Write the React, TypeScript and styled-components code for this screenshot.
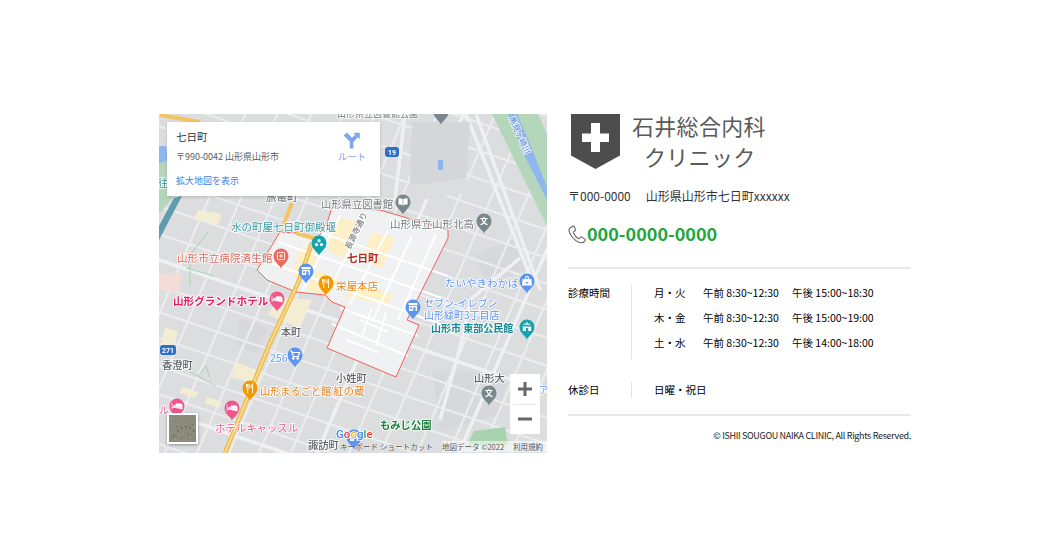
import React from "react";
import styled, { createGlobalStyle } from "styled-components";

const FONT = `"Noto Sans CJK JP", "Noto Sans", sans-serif`;

const Global = createGlobalStyle`
  html, body { margin: 0; padding: 0; background: #fff; }
  body { font-family: ${FONT}; color: #222; overflow: hidden; }
`;

const Page = styled.div`
  display: flex;
  align-items: flex-start;
  gap: 21px;
  width: 1063px;
  height: 560px;
  box-sizing: border-box;
  padding: 114px 0 0 159px;
`;

const MapFrame = styled.div`
  position: relative;
  flex: none;
  width: 388px;
  height: 339px;
  overflow: hidden;
  background: #dcdddf;
`;

const MapSvg = styled.svg`
  display: block;
  width: 388px;
  height: 339px;
  filter: blur(0.3px);
`;

const MapLabel = styled.text<{ $c: string; $s: number; $w: number }>`
  font-family: ${FONT};
  font-size: ${(p) => p.$s}px;
  font-weight: ${(p) => p.$w};
  fill: ${(p) => p.$c};
  stroke: rgba(255, 255, 255, 0.8);
  stroke-width: 2px;
  paint-order: stroke;
  stroke-linejoin: round;
`;

const PinGlyph = styled.text`
  font-family: ${FONT};
  font-size: 8px;
  font-weight: 700;
  fill: #fff;
  text-anchor: middle;
`;

const GoogleMark = styled.text`
  font-family: "Roboto", "Liberation Sans", sans-serif;
  font-size: 11.5px;
  font-weight: 500;
  stroke: #fff;
  stroke-width: 1.5px;
  paint-order: stroke;
`;

const InfoCard = styled.div`
  position: absolute;
  left: 8px;
  top: 8px;
  width: 213px;
  height: 74px;
  box-sizing: border-box;
  padding: 7px 5px 0 9px;
  background: #fff;
  box-shadow: 0 1px 3px rgba(0, 0, 0, 0.18);
  display: grid;
  grid-template-columns: 1fr 46px;
`;

const CardText = styled.div`
  display: flex;
  flex-direction: column;
`;

const PlaceName = styled.div`
  font-size: 10.5px;
  line-height: 16px;
  font-weight: 400;
  color: #2f2f2f;
`;

const PlaceAddress = styled.div`
  margin-top: 4px;
  font-size: 9px;
  line-height: 16px;
  color: #5b5b5b;
`;

const EnlargeLink = styled.a`
  margin-top: 8px;
  font-size: 9px;
  line-height: 16px;
  color: #3b7fe0;
`;

const RouteBlock = styled.div`
  display: flex;
  flex-direction: column;
  align-items: center;
  padding-top: 2px;
  color: #7fa8ec;
  font-size: 9.5px;
  line-height: 14px;
`;

const Thumb = styled.div`
  position: absolute;
  left: 8px;
  top: 299px;
  width: 31px;
  height: 31px;
  box-sizing: border-box;
  border: 2px solid #fff;
  box-shadow: 0 1px 3px rgba(0, 0, 0, 0.35);
  background: #8c8a7a;
  overflow: hidden;
`;

const ZoomBox = styled.div`
  position: absolute;
  left: 351px;
  top: 260px;
  width: 30px;
  height: 60px;
  background: #fff;
  display: flex;
  flex-direction: column;
  align-items: center;
`;

const ZoomBtn = styled.div`
  flex: 1;
  width: 100%;
  display: flex;
  align-items: center;
  justify-content: center;
`;

const ZoomSep = styled.div`
  width: 24px;
  height: 1px;
  background: #e6e6e6;
`;

const MapFooter = styled.div`
  position: absolute;
  right: 0;
  bottom: 0;
  left: 181px;
  height: 13px;
  display: flex;
  align-items: center;
  font-size: 7.5px;
  color: #555;
  white-space: nowrap;
`;

const FootKeys = styled.span`
  width: 102px;
  letter-spacing: 0.1px;
  text-shadow: 0 0 2px #fff;
`;

const FootData = styled.span`
  width: 71px;
  background: rgba(255, 255, 255, 0.55);
`;

const FootTerms = styled.span`
  flex: 1;
  background: rgba(255, 255, 255, 0.55);
`;

const Info = styled.div`
  flex: none;
  width: 343px;
`;

const LogoRow = styled.div`
  display: flex;
  height: 54px;
  padding-left: 3px;
`;

const LogoWords = styled.div`
  margin-left: 12px;
  margin-top: -4px;
  color: #5a5a5a;
  font-weight: 400;
  font-size: 22px;
  line-height: 31px;
  letter-spacing: 0.3px;
`;

const LogoSub = styled.div`
  padding-left: 12px;
  letter-spacing: 0.3px;
`;

const Address = styled.p`
  margin: 18px 0 0;
  font-size: 12px;
  line-height: 20px;
  color: #333;
`;

const Gap = styled.span`
  display: inline-block;
  width: 15px;
`;

const PhoneRow = styled.div`
  display: flex;
  align-items: center;
  height: 28px;
  margin-top: 14px;
`;

const PhoneNumber = styled.span`
  font-size: 18px;
  font-weight: 700;
  color: #22a63d;
  line-height: 26px;
  padding-bottom: 3px;
`;

const Rule = styled.hr`
  margin: 0;
  border: 0;
  height: 2px;
  background: #e8e8e8;
`;

const FirstRule = styled(Rule)`
  margin-top: 19px;
`;

const HoursBlock = styled.div`
  display: grid;
  grid-template-columns: 63px 1fr;
  margin-top: 16px;
`;

const HolidayBlock = styled(HoursBlock)`
  margin-top: 23px;
`;

const HoursTerm = styled.div`
  font-size: 10.5px;
  line-height: 16px;
  color: #000;
`;

const HoursValue = styled.div`
  border-left: 1px solid #e3e3e3;
  padding-left: 22px;
  display: flex;
  flex-direction: column;
`;

const HoursRow = styled.div`
  display: grid;
  grid-template-columns: 49px 89px auto;
  height: 25px;
  font-size: 10.5px;
  line-height: 16px;
  color: #000;
  white-space: nowrap;
`;

const LastHoursRow = styled(HoursRow)`
  height: 24px;
`;

const HolidayValue = styled.div`
  font-size: 10.5px;
  line-height: 16px;
  color: #000;
`;

const SecondRule = styled(Rule)`
  margin-top: 16px;
`;

const Copyright = styled.p`
  margin: 12px 0 0;
  text-align: right;
  font-size: 9px;
  line-height: 16px;
  letter-spacing: -0.33px;
  color: #222;
`;

type L = [string, number, number, string, number, number];
const labels: L[] = [
  ["山形県立図書館", 321, 208, "#787c80", 10.3, 400],
  ["山形県立山形北高", 390, 228, "#787c80", 10.5, 400],
  ["旅篭町", 266, 201, "#5f6368", 10.5, 400],
  ["水の町屋七日町御殿堰", 231, 231, "#3a9aa5", 10.5, 400],
  ["山形市立病院済生館", 177, 262, "#e0695e", 10.6, 400],
  ["七日町", 347, 262, "#b3261e", 10.5, 700],
  ["栄屋本店", 336, 290, "#e8861a", 10.5, 400],
  ["山形グランドホテル", 173, 305, "#e91e63", 10.6, 700],
  ["本町", 281, 336, "#5f6368", 10, 500],
  ["256", 270, 362, "#6a9df2", 10.5, 400],
  ["香澄町", 162, 369, "#5f6368", 10.3, 500],
  ["小姓町", 336, 382, "#5f6368", 10.3, 500],
  ["山形まるごと館 紅の蔵", 260, 395, "#e8861a", 10.2, 400],
  ["ホテルキャッスル", 215, 432, "#ee5c8c", 10.4, 400],
  ["諏訪町", 308, 449, "#5f6368", 10.3, 500],
  ["もみじ公園", 380, 429, "#188038", 10.3, 700],
  ["たいやきわかば", 445, 287, "#5f95f2", 10.5, 400],
  ["セブン-イレブン", 424, 307, "#5f95f2", 10, 400],
  ["山形緑町3丁目店", 424, 319, "#5f95f2", 10, 400],
  ["山形市 東部公民館", 431, 332, "#138a96", 10, 700],
  ["山形大", 474, 382, "#5f6368", 10.3, 500],
  ["ル", 159, 414, "#ee5c8c", 10, 400],
  ["ア", 539, 394, "#5f95f2", 10, 400],
  ["山形県立図書館公園", 337, 117, "#787c80", 9, 400],
  ["往", 158, 187, "#2f8f9a", 10, 400],
];

const A = (x0: number): [number, number, number, number] => [x0 + 340 * 0.432, 113, x0, 453];
const B = (y0: number): [number, number, number, number] => [159, y0, 547, y0 + 388 * 0.34];

const minorA = [-60, -28, 6, 38, 70, 100, 132, 190, 222, 258, 290, 322, 352, 385, 420, 452];
const minorB = [-160, -130, -100, -72, -44, -16, 12, 38, 64, 92, 120, 172, 198, 224, 252, 280, 330, 356, 384, 410, 440];
const majorA = [158, 300];
const majorB = [146, 296, 380];

const blocks = [
  "476,255 516,238 528,268 486,286",
  "240,318 268,328 256,354 236,345",
  "433,371 508,372 500,414 440,432",
];

const paleCream = [
  "198,210 222,214 218,224 194,220",
  "278,297 312,300 300,328 268,315",
  "165,327 178,332 172,353 159,350",
  "182,387 198,392 195,398 180,393",
  "207,397 222,402 219,408 205,403",
  "236,362 262,372 258,384 232,378",
];

const districtCream = [
  "335,218 362,222 345,258 328,252",
  "372,232 395,238 382,268 360,262",
  "300,247 318,252 310,282 292,276",
  "316,270 340,280 328,296 306,290",
  "347,282 392,294 388,305 345,296",
];

const lightStreets: [number, number, number, number][] = [
  [340, 216, 302, 292], [364, 222, 326, 296], [388, 230, 350, 304], [412, 236, 372, 322], [436, 234, 398, 320],
  [268, 262, 440, 324], [278, 242, 448, 300], [290, 222, 448, 276], [332, 324, 408, 356], [340, 308, 418, 336],
  [346, 340, 378, 352], [360, 320, 388, 332], [372, 308, 362, 336], [386, 312, 376, 346],
];

type PinProps = { x: number; y: number; c: string; kind: string };
const Pin = ({ x, y, c, kind }: PinProps) => (
  <g transform={`translate(${x} ${y})`}>
    <path d="M0 12.5C-1.5 8.6-7.5 6-7.5 0A7.5 7.5 0 0 1 7.5 0C7.5 6 1.5 8.6 0 12.5Z" fill={c} />
    {kind === "food" && (
      <path d="M-3.5-4v3.4c0 1 .6 1.5 1.2 1.7V5M-2.3-4v3M-1-4v3.4c0 .8-.6 1.4-1.3 1.6M2.6 5V-4.2C1.3-3.6 1-1.8 1-.2h1.6" fill="none" stroke="#fff" strokeWidth="0.95" />
    )}
    {kind === "shop" && (
      <g fill="#fff">
        <rect x="-4.5" y="-4" width="9" height="2" />
        <path d="M-4-1.2h8V4h-1.4V.2h-2.4V4H-4Zm1.2 1.4v2h1.8v-2Z" />
      </g>
    )}
    {kind === "cart" && (
      <g fill="none" stroke="#fff" strokeWidth="1.2">
        <path d="M-5-4h1.6l1.8 5.5H3.2L4.6-2.5H-3" />
        <circle cx="-1.6" cy="3.4" r=".7" fill="#fff" />
        <circle cx="2.7" cy="3.4" r=".7" fill="#fff" />
      </g>
    )}
    {kind === "hotel" && (
      <path d="M-5-3.4v6.6M-5 1.2H5.2v2M-3.4-.6h1.6V.8h-1.6ZM-1-2.2H3.6c1 0 1.6.6 1.6 1.8V.8H-1Z" fill="#fff" stroke="#fff" strokeWidth="0.7" />
    )}
    {kind === "school" && (
      <PinGlyph x="0" y="3">文</PinGlyph>
    )}
    {kind === "book" && (
      <path d="M-4.6-3.6C-2.8-4-1.2-3.6-.3-2.8V3.4C-1.2 2.6-2.8 2.2-4.6 2.6ZM4.6-3.6C2.8-4 1.2-3.6.3-2.8V3.4C1.2 2.6 2.8 2.2 4.6 2.6Z" fill="#fff" />
    )}
    {kind === "dots" && (
      <g fill="#fff">
        <circle cx="0" cy="-2.3" r="1.6" />
        <circle cx="-2.5" cy="1.6" r="1.6" />
        <circle cx="2.5" cy="1.6" r="1.6" />
      </g>
    )}
    {kind === "temple" && (
      <path d="M-3.4-3.2h6.8v1H-3.4ZM-4.2-.6h8.4V4H1.2V1H-1.2V4h-3ZM-.6-5h1.2v1.8H-.6Z" fill="#fff" />
    )}
    {kind === "bag" && (
      <path d="M-4.4-2H4.4L5 4.4H-5ZM-2-2V-3A2 2 0 0 1 2-3V-2H.9V-3A.9.9 0 0 0-.9-3V-2ZM-1.6 1A1.6 1.6 0 0 0 1.6 1Z" fill="#fff" fillRule="evenodd" />
    )}
    {kind === "hospital" && (
      <g fill="none" stroke="#fff" strokeWidth=".9">
        <rect x="-3.6" y="-3.6" width="7.2" height="7.2" rx="1" />
        <path d="M0-2v4M-2 0h4" />
      </g>
    )}
  </g>
);

const pins: PinProps[] = [
  { x: 441, y: 112, c: "#78868e", kind: "none" },
  { x: 403, y: 202, c: "#78868e", kind: "book" },
  { x: 484, y: 221, c: "#78868e", kind: "school" },
  { x: 489, y: 393, c: "#78868e", kind: "school" },
  { x: 319, y: 243, c: "#12a5b0", kind: "dots" },
  { x: 281, y: 256, c: "#ea6a5e", kind: "hospital" },
  { x: 306, y: 271, c: "#5b95f2", kind: "shop" },
  { x: 326, y: 283, c: "#f29900", kind: "food" },
  { x: 277, y: 299, c: "#f0558c", kind: "hotel" },
  { x: 295, y: 355, c: "#5b95f2", kind: "cart" },
  { x: 250, y: 388, c: "#f29900", kind: "food" },
  { x: 232, y: 408, c: "#f0558c", kind: "hotel" },
  { x: 177, y: 406, c: "#f0558c", kind: "hotel" },
  { x: 413, y: 307, c: "#5b95f2", kind: "shop" },
  { x: 527, y: 281, c: "#5b95f2", kind: "bag" },
  { x: 527, y: 327, c: "#12a5b0", kind: "temple" },
  { x: 354, y: 437, c: "#5b95f2", kind: "shop" },
];

const specks = Array.from({ length: 320 }, (_, i) => ({
  x: (i * 37) % 27,
  y: (i * i * 13 + i * 7) % 27,
  c: ["#6d6c5e", "#a8a596", "#7a7768", "#b5b1a2", "#5f6252"][i % 5],
}));

const Shield = () => (
  <svg width="49" height="56" viewBox="0 0 49 56">
    <path d="M0 0H49V41.500L24.500 55L0 41.500Z" fill="#4d4d4d" />
    <path d="M20 9h9v10.500h9v8.500H29v10h-9V28H11V19.500h9Z" fill="#fff" />
  </svg>
);

const Phone = () => (
  <svg width="19" height="19" viewBox="0 0 19 19" fill="none" stroke="#666" strokeWidth="1.100" strokeLinejoin="round">
    <path d="M4.600 1.200 2 3C.7 4 .9 6 1.600 7.700c1.300 3 3.400 5.700 6 7.700 1.600 1.200 3.600 2.600 5.600 2.400 1.400 0 3.400-1.300 4-2.400.3-.5.1-1-.3-1.300l-3-2c-.5-.3-1-.3-1.400.1l-1 1.200c-.4.4-.9.4-1.400.1-2-1.400-3.500-3.400-4.600-5.600-.2-.5-.1-1 .3-1.300l1.200-.9c.4-.3.5-.8.3-1.300L6.200 1.500c-.3-.5-1-.6-1.600-.3Z" />
  </svg>
);

const RouteIcon = () => (
  <svg width="18" height="18" viewBox="0 0 18 18" fill="#7fa8ec">
    <path d="M6.800 17.500V10.500L.6 4.400 3.800 1.400 9 6.700 12.200 3.600 10.300 1.700H16.800V8.200L14.900 6.300 10.400 10.900V17.500Z" />
  </svg>
);

export default function App() {
  return (
    <>
      <Global />
      <Page>
        <MapFrame>
          <MapSvg viewBox="159 114 388 339">
            <rect x="159" y="114" width="388" height="339" fill="#dcdddf" />
            {blocks.map((p) => (
              <polygon key={p} points={p} fill="#d6d8db" />
            ))}
            <g stroke="#ebecee" strokeWidth="2.2" fill="none">
              {minorA.map((x) => {
                const [a, b, c, d] = A(x + 159);
                return <line key={x} x1={a} y1={b} x2={c} y2={d} />;
              })}
              {minorB.map((y) => {
                const [a, b, c, d] = B(y + 114);
                return <line key={y} x1={a} y1={b} x2={c} y2={d} />;
              })}
            </g>
            <g stroke="#eff0f1" strokeWidth="3.5" fill="none">
              {majorA.map((x) => {
                const [a, b, c, d] = A(x + 159);
                return <line key={x} x1={a} y1={b} x2={c} y2={d} />;
              })}
              {majorB.map((y) => {
                const [a, b, c, d] = B(y + 114);
                return <line key={y} x1={a} y1={b} x2={c} y2={d} />;
              })}
              <path d="M476 114 540 290M466 114 530 276M520 258 470 300 462 340 440 420" />
              <path d="M405 114 395 200" />
            </g>
            <path d="M492 114H538L547 134V226Z" fill="#b4d6bb" />
            <path d="M508 114H517L527 137 547 187V200L537 180 523 153Z" fill="#8fb6ee" />
            <path d="M159 146 166 150 174 196 159 214Z" fill="#b4d6bb" />
            <path d="M159 146H166L168 160 159 163Z" fill="#8fb6ee" />
            <path d="M182 196 159 240V226L174 198Z" fill="#5f9cb0" />
            <path d="M467 445 474 431 505 427 508 445Z" fill="#a9d3b0" />
            <path d="M159 273H183L178 292 159 290Z" fill="#f4dcd8" />
            <polygon points="412,122 470,122 466,178 410,186" fill="#d5d6d9" />
            <path d="M410 186 466 178 472 192 420 200Z" fill="#dcdddf" />
            <rect x="438" y="160" width="5" height="10" fill="#8fb6ee" />
            {paleCream.map((p) => (
              <polygon key={p} points={p} fill="#f3edd4" />
            ))}
            <path d="M190 255 208 232M186 268 214 276M190 260V285" stroke="#a4d4ae" strokeWidth="1" fill="none" />
            <path d="M198 376 206 366 210 378M190 372 216 386" stroke="#a4d4ae" strokeWidth="1" fill="none" />
            <polygon
              points="257,270 280,232 296,233 318,238 328,220 332,207 380,210 448,230 448,238 422,290 407,320 419,325 396,377 327,348 345,307 332,302 325,295 296,292 267,280"
              fill="#eff1f3"
            />
            {districtCream.map((p) => (
              <polygon key={p} points={p} fill="#fdf0c6" />
            ))}
            <g stroke="#fff" strokeWidth="2" fill="none">
              {lightStreets.map(([a, b, c, d]) => (
                <line key={`${a}-${b}`} x1={a} y1={b} x2={c} y2={d} />
              ))}
            </g>
            <polygon
              points="257,270 280,232 296,233 318,238 328,220 332,207 380,210 448,230 448,238 422,290 407,320 419,325 396,377 327,348 345,307 332,302 325,295 296,292 267,280"
              fill="none"
              stroke="#f0635a"
              strokeWidth="1"
            />
            <path d="M225 453 252 387 270 343 298 283 312 243" fill="none" stroke="#eeb645" strokeWidth="4.5" />
            <path d="M225 453 252 387 270 343 298 283 312 243" fill="none" stroke="#f9d98a" strokeWidth="2" />
            <path d="M283 226 292 203M296 233 316 239" fill="none" stroke="#f3c463" strokeWidth="4" />
            <path d="M160 115 200 122" fill="none" stroke="#f3c463" strokeWidth="4" />
            <rect x="385" y="147" width="14" height="10" rx="3" fill="#2f6fc9" />
            <text x="392" y="155" textAnchor="middle" fontFamily="Roboto, sans-serif" fontSize="7" fontWeight="700" fill="#fff">19</text>
            <rect x="160" y="345" width="16" height="10" rx="3" fill="#2f6fc9" />
            <text x="168" y="353" textAnchor="middle" fontFamily="Roboto, sans-serif" fontSize="7" fontWeight="700" fill="#fff">271</text>
            {pins.map((p) => (
              <Pin key={`${p.x}-${p.y}`} {...p} />
            ))}
            {labels.map(([t, x, y, c, s, w]) => (
              <MapLabel key={t + x} x={x} y={y} $c={c} $s={s} $w={w}>
                {t}
              </MapLabel>
            ))}
            <MapLabel x={350} y={250} $c="#5f6368" $s={8} $w={400} transform="rotate(-64 350 250)">
              長源寺通り
            </MapLabel>
            <MapLabel x={509} y={118} $c="#4f7fd0" $s={8} $w={400} transform="rotate(66 509 118)">
              馬見ヶ崎川
            </MapLabel>
            <GoogleMark x={336} y={438}>
              <tspan fill="#4285f4">G</tspan>
              <tspan fill="#ea4335">o</tspan>
              <tspan fill="#fbbc05">o</tspan>
              <tspan fill="#4285f4">g</tspan>
              <tspan fill="#34a853">l</tspan>
              <tspan fill="#ea4335">e</tspan>
            </GoogleMark>
          </MapSvg>
          <InfoCard>
            <CardText>
              <PlaceName>七日町</PlaceName>
              <PlaceAddress>〒990-0042 山形県山形市</PlaceAddress>
              <EnlargeLink>拡大地図を表示</EnlargeLink>
            </CardText>
            <RouteBlock>
              <RouteIcon />
              ルート
            </RouteBlock>
          </InfoCard>
          <Thumb>
            <svg width="27" height="27" viewBox="0 0 27 27">
              <rect width="27" height="27" fill="#8c8a7a" />
              {specks.map((s, i) => (
                <rect key={i} x={s.x} y={s.y} width="1.3" height="1.3" fill={s.c} />
              ))}
            </svg>
          </Thumb>
          <ZoomBox>
            <ZoomBtn>
              <svg width="14" height="14" viewBox="0 0 14 14">
                <path d="M5.500 0h3v5.500H14v3H8.500V14h-3V8.500H0v-3h5.500Z" fill="#666" />
              </svg>
            </ZoomBtn>
            <ZoomSep />
            <ZoomBtn>
              <svg width="14" height="14" viewBox="0 0 14 14">
                <rect y="5.500" width="14" height="3" fill="#666" />
              </svg>
            </ZoomBtn>
          </ZoomBox>
          <MapFooter>
            <FootKeys>キーボード ショートカット</FootKeys>
            <FootData>地図データ ©2022</FootData>
            <FootTerms>利用規約</FootTerms>
          </MapFooter>
        </MapFrame>
        <Info>
          <LogoRow>
            <Shield />
            <LogoWords>
              石井総合内科
              <LogoSub>クリニック</LogoSub>
            </LogoWords>
          </LogoRow>
          <Address>
            〒000-0000
            <Gap />
            山形県山形市七日町xxxxxx
          </Address>
          <PhoneRow>
            <Phone />
            <PhoneNumber>000-0000-0000</PhoneNumber>
          </PhoneRow>
          <FirstRule />
          <HoursBlock>
            <HoursTerm>診療時間</HoursTerm>
            <HoursValue>
              <HoursRow>
                <span>月・火</span>
                <span>午前 8:30~12:30</span>
                <span>午後 15:00~18:30</span>
              </HoursRow>
              <HoursRow>
                <span>木・金</span>
                <span>午前 8:30~12:30</span>
                <span>午後 15:00~19:00</span>
              </HoursRow>
              <LastHoursRow>
                <span>土・水</span>
                <span>午前 8:30~12:30</span>
                <span>午後 14:00~18:00</span>
              </LastHoursRow>
            </HoursValue>
          </HoursBlock>
          <HolidayBlock>
            <HoursTerm>休診日</HoursTerm>
            <HoursValue>
              <HolidayValue>日曜・祝日</HolidayValue>
            </HoursValue>
          </HolidayBlock>
          <SecondRule />
          <Copyright>© ISHII SOUGOU NAIKA CLINIC, All Rights Reserved.</Copyright>
        </Info>
      </Page>
    </>
  );
}
